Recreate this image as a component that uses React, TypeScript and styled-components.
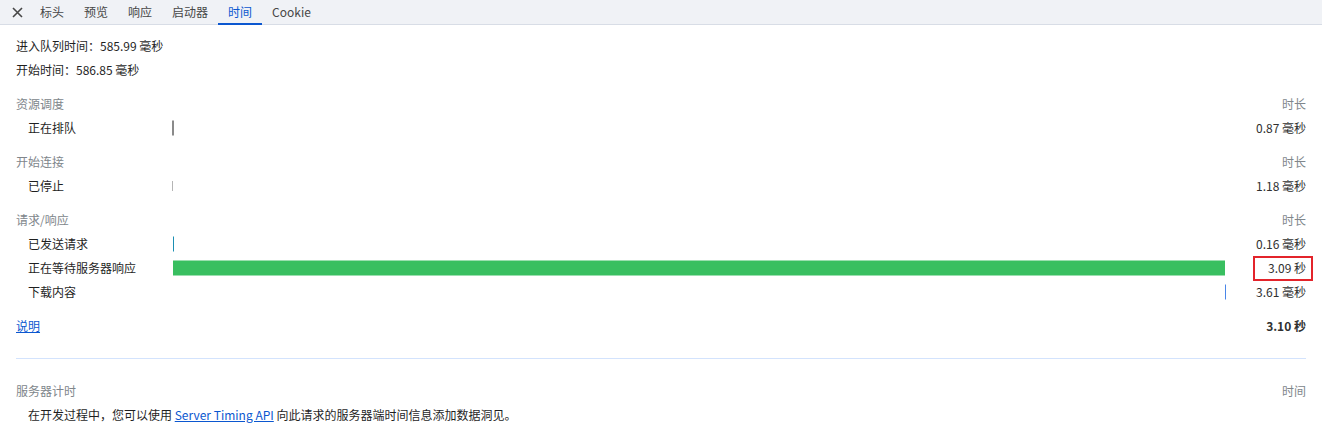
import React from "react";
import styled, { createGlobalStyle } from "styled-components";

const Global = createGlobalStyle`
  html, body { margin: 0; padding: 0; background: #ffffff; }
  body {
    font-family: "Noto Sans CJK SC", "Noto Sans", sans-serif;
    font-size: 12px;
    color: #1f1f1f;
  }
`;

const Page = styled.div`
  width: 1322px;
  display: flex;
  flex-direction: column;
`;

const TabBar = styled.div`
  display: flex;
  align-items: stretch;
  height: 25px;
  box-sizing: border-box;
  background: #f0f2f6;
  border-bottom: 1px solid #d8dde6;
`;

const CloseButton = styled.div`
  display: flex;
  align-items: center;
  justify-content: center;
  width: 30px;
  padding-left: 4px;
  box-sizing: border-box;
`;

const Tab = styled.div<{ $active?: boolean }>`
  position: relative;
  display: flex;
  align-items: center;
  padding: 0 10px;
  line-height: 24px;
  color: ${(p) => (p.$active ? "#0b57d0" : "#474747")};
  &::after {
    content: "";
    display: ${(p) => (p.$active ? "block" : "none")};
    position: absolute;
    left: 0;
    right: 0;
    bottom: -1px;
    height: 2px;
    background: #0b57d0;
  }
`;

const Content = styled.div`
  display: flex;
  flex-direction: column;
  padding: 9px 16px 0 16px;
`;

const InfoLine = styled.div`
  line-height: 24px;
  height: 24px;
  color: #1f1f1f;
`;

const Group = styled.div<{ $gap?: number }>`
  display: flex;
  flex-direction: column;
  margin-top: ${(p) => p.$gap ?? 10}px;
`;

const Row = styled.div`
  display: grid;
  grid-template-columns: 157px 1fr 80px;
  height: 24px;
  line-height: 24px;
  align-items: center;
`;

const HeaderLabel = styled.div`
  color: #80868b;
`;

const HeaderRight = styled.div`
  grid-column: 3;
  text-align: right;
  color: #80868b;
`;

const Label = styled.div`
  padding-left: 12px;
  white-space: nowrap;
  color: #1f1f1f;
`;

const Track = styled.div`
  position: relative;
  height: 24px;
`;

const Bar = styled.div<{ $color: string; $h: number }>`
  position: absolute;
  top: 50%;
  height: ${(p) => p.$h}px;
  transform: translateY(-50%);
  background: ${(p) => p.$color};
`;

const Value = styled.div<{ $bold?: boolean; $marked?: boolean }>`
  position: relative;
  height: 24px;
  text-align: right;
  white-space: nowrap;
  color: #303030;
  font-weight: ${(p) => (p.$bold ? 700 : 400)};
  &::after {
    content: "";
    display: ${(p) => (p.$marked ? "block" : "none")};
    position: absolute;
    top: 0;
    bottom: -1px;
    left: 27px;
    right: -7px;
    border: 2px solid #e3242b;
  }
`;

const LinkText = styled.a`
  color: #0b57d0;
  text-decoration: underline;
  cursor: pointer;
`;

const Divider = styled.div`
  height: 1px;
  background: #d3e3fd;
  margin: 20px 0;
`;

const Note = styled.div`
  padding-left: 12px;
  line-height: 24px;
  height: 24px;
  color: #1f1f1f;
`;

const CloseIcon = () => (
  <svg width="11" height="11" viewBox="0 0 11 11">
    <path d="M1 1 L10 10 M10 1 L1 10" stroke="#474747" strokeWidth="1.6" fill="none" />
  </svg>
);

type Entry = {
  label: string;
  value: string;
  bar: { left: string; width: string; color: string; h: number };
  marked?: boolean;
};

type Section = { title: string; entries: Entry[] };

const sections: Section[] = [
  {
    title: "资源调度",
    entries: [
      {
        label: "正在排队",
        value: "0.87 毫秒",
        bar: { left: "-1px", width: "2px", color: "#8a8a8a", h: 15 },
      },
    ],
  },
  {
    title: "开始连接",
    entries: [
      {
        label: "已停止",
        value: "1.18 毫秒",
        bar: { left: "-1px", width: "1px", color: "#b5b5b5", h: 10 },
      },
    ],
  },
  {
    title: "请求/响应",
    entries: [
      {
        label: "已发送请求",
        value: "0.16 毫秒",
        bar: { left: "0px", width: "1px", color: "#1b8fb3", h: 15 },
      },
      {
        label: "正在等待服务器响应",
        value: "3.09 秒",
        bar: { left: "0px", width: "1052px", color: "#39bf60", h: 15 },
        marked: true,
      },
      {
        label: "下载内容",
        value: "3.61 毫秒",
        bar: { left: "1052px", width: "1px", color: "#4a86e8", h: 15 },
      },
    ],
  },
];

const tabs = ["标头", "预览", "响应", "启动器", "时间", "Cookie"];

export default function App() {
  return (
    <Page>
      <Global />
      <TabBar>
        <CloseButton>
          <CloseIcon />
        </CloseButton>
        {tabs.map((t) => (
          <Tab key={t} $active={t === "时间"}>
            {t}
          </Tab>
        ))}
      </TabBar>
      <Content>
        <InfoLine>进入队列时间：585.99 毫秒</InfoLine>
        <InfoLine>开始时间：586.85 毫秒</InfoLine>
        {sections.map((s) => (
          <Group key={s.title}>
            <Row>
              <HeaderLabel>{s.title}</HeaderLabel>
              <HeaderRight>时长</HeaderRight>
            </Row>
            {s.entries.map((e) => (
              <Row key={e.label}>
                <Label>{e.label}</Label>
                <Track>
                  <Bar
                    $color={e.bar.color}
                    $h={e.bar.h}
                    style={{ left: e.bar.left, width: e.bar.width }}
                  />
                </Track>
                <Value $marked={e.marked}>{e.value}</Value>
              </Row>
            ))}
          </Group>
        ))}
        <Group>
          <Row>
            <div>
              <LinkText>说明</LinkText>
            </div>
            <div />
            <Value $bold>3.10 秒</Value>
          </Row>
        </Group>
        <Divider />
        <Row>
          <HeaderLabel>服务器计时</HeaderLabel>
          <HeaderRight>时间</HeaderRight>
        </Row>
        <Note>
          在开发过程中，您可以使用 <LinkText>Server Timing API</LinkText> 向此请求的服务器端时间信息添加数据洞见。
        </Note>
      </Content>
    </Page>
  );
}
